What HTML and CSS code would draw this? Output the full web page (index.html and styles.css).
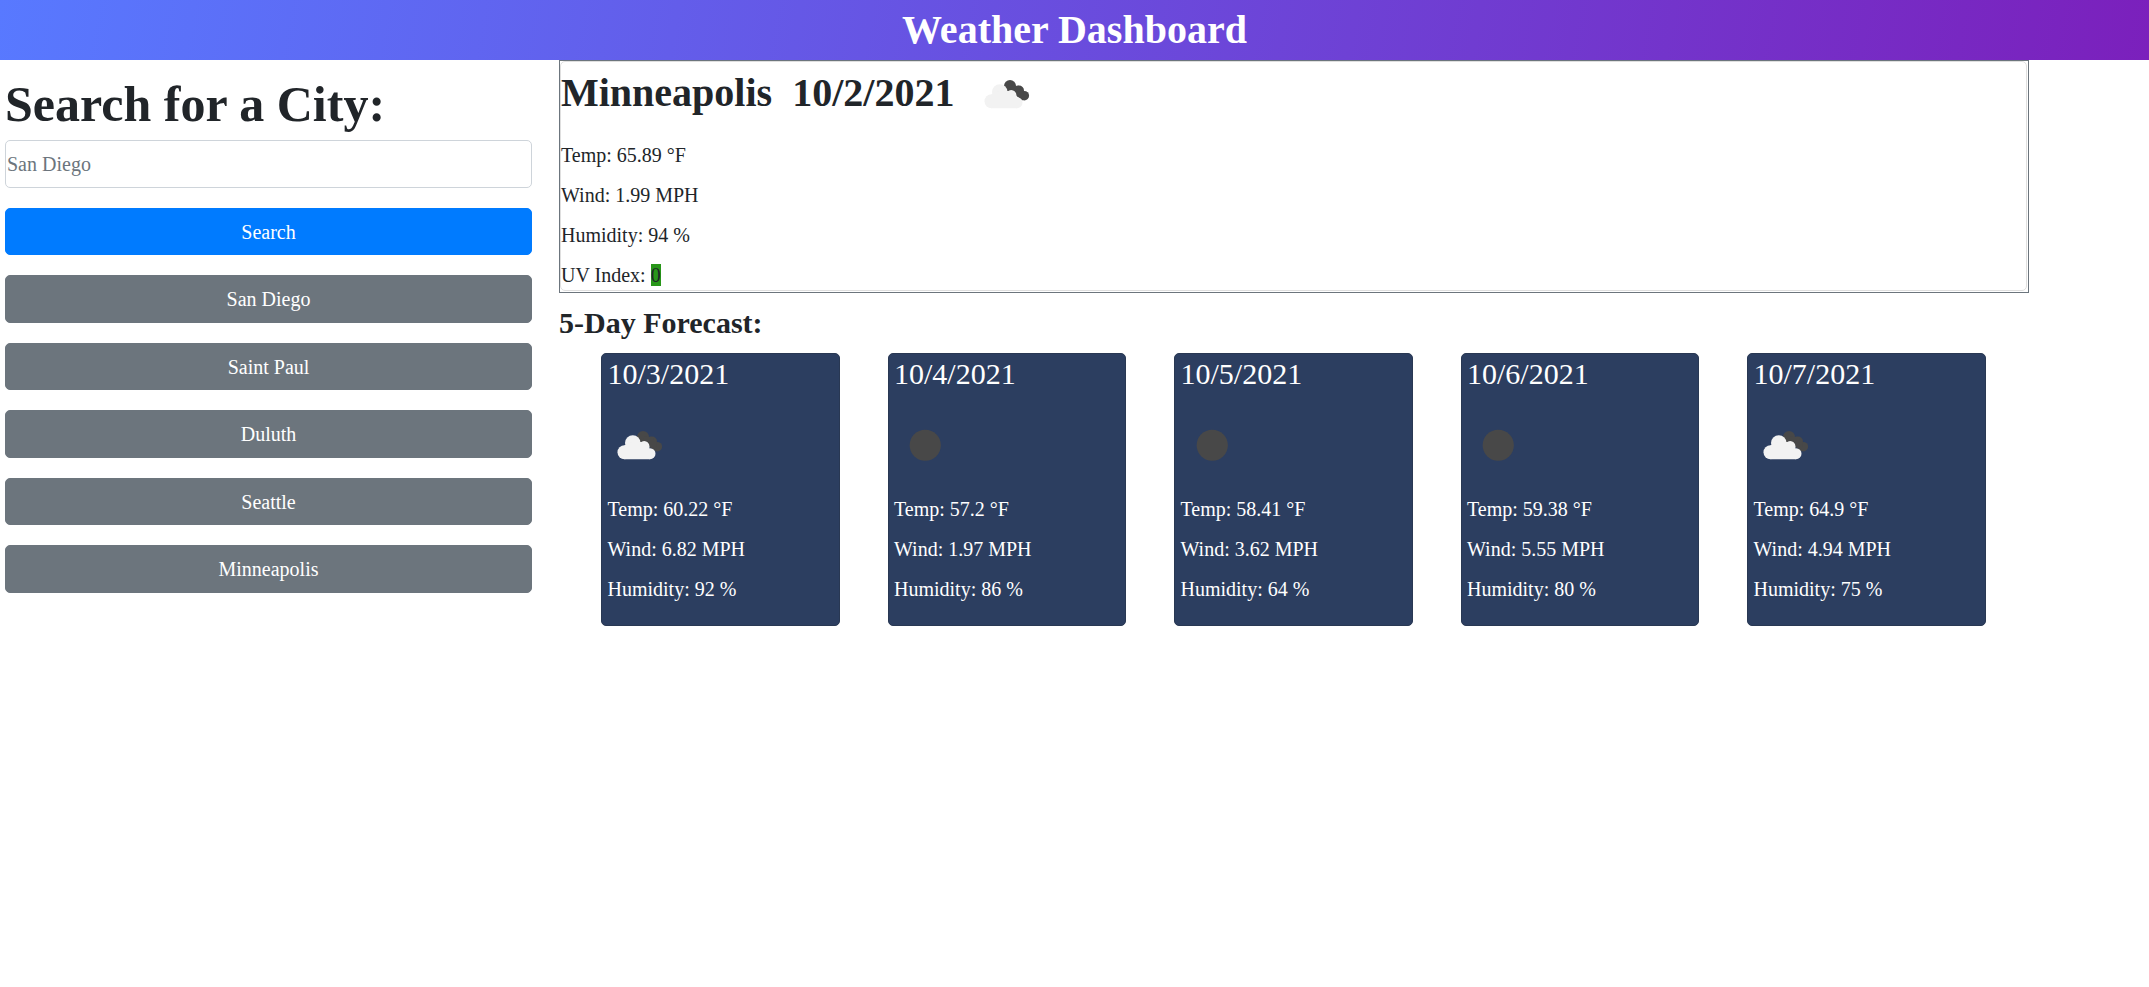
FILE: index.html
```html
<!DOCTYPE html>
<html lang="en">
<head>
<meta charset="utf-8">
<title>Weather Dashboard</title>
<link rel="stylesheet" href="styles.css">
</head>
<body>
<svg class="defs" aria-hidden="true">
  <symbol id="clouds" viewBox="0 0 62.5 62.5">
    <g fill="#484848">
      <circle cx="35" cy="23" r="6"/>
      <circle cx="44" cy="27.500" r="5"/>
      <circle cx="49.300" cy="32.700" r="4.800"/>
      <path d="M35 23L44 22.800L49 29L48 37.500L40 32Z"/>
    </g>
    <g fill="#f2f2f2">
      <circle cx="16.500" cy="38.200" r="7"/>
      <circle cx="24.800" cy="29" r="7.800"/>
      <circle cx="36.200" cy="32.300" r="5.200"/>
      <circle cx="42" cy="39.700" r="5.500"/>
      <path d="M16.500 31.200L25 28H34L41.300 33L42 45.200H16.500Z"/>
    </g>
  </symbol>
  <symbol id="moon" viewBox="0 0 62.5 62.5">
    <circle cx="31.250" cy="31.250" r="15.600" fill="#484848"/>
  </symbol>
</svg>
<header class="header"><h1>Weather Dashboard</h1></header>
<div class="layout">
  <aside class="sidebar">
    <h2>Search for a City:</h2>
    <input class="field" type="text" placeholder="San Diego">
    <button class="btn primary">Search</button>
    <button class="btn">San Diego</button>
    <button class="btn">Saint Paul</button>
    <button class="btn">Duluth</button>
    <button class="btn">Seattle</button>
    <button class="btn">Minneapolis</button>
  </aside>
  <main class="main">
    <section class="today">
      <div class="today-card">
        <div class="city"><h2>Minneapolis&nbsp; 10/2/2021</h2><svg class="icon"><use href="#clouds"/></svg></div>
        <p>Temp: 65.89 °F</p>
        <p>Wind: 1.99 MPH</p>
        <p>Humidity: 94 %</p>
        <p>UV Index: <span class="uv">0</span></p>
      </div>
    </section>
    <h3 class="forecast-title">5-Day Forecast:</h3>
    <section class="forecast">
      <article class="day"><h4>10/3/2021</h4><svg class="icon"><use href="#clouds"/></svg><p>Temp: 60.22 °F</p><p>Wind: 6.82 MPH</p><p>Humidity: 92 %</p></article>
      <article class="day"><h4>10/4/2021</h4><svg class="icon"><use href="#moon"/></svg><p>Temp: 57.2 °F</p><p>Wind: 1.97 MPH</p><p>Humidity: 86 %</p></article>
      <article class="day"><h4>10/5/2021</h4><svg class="icon"><use href="#moon"/></svg><p>Temp: 58.41 °F</p><p>Wind: 3.62 MPH</p><p>Humidity: 64 %</p></article>
      <article class="day"><h4>10/6/2021</h4><svg class="icon"><use href="#moon"/></svg><p>Temp: 59.38 °F</p><p>Wind: 5.55 MPH</p><p>Humidity: 80 %</p></article>
      <article class="day"><h4>10/7/2021</h4><svg class="icon"><use href="#clouds"/></svg><p>Temp: 64.9 °F</p><p>Wind: 4.94 MPH</p><p>Humidity: 75 %</p></article>
    </section>
  </main>
</div>
</body>
</html>
```
FILE: styles.css
```css
* { box-sizing: border-box; }
body {
  margin: 0;
  background: #fff;
  color: #212529;
  font: 20px/30px "Liberation Serif", "Times New Roman", serif;
}
h1, h2, h3, h4, p { margin: 0; }
.defs { display: none; }
.header {
  height: 60px;
  background: linear-gradient(100deg, #5879ff, #7b20bc);
  color: #fff;
  text-align: center;
}
.header h1 { font-size: 40px; line-height: 60px; }
.layout { display: flex; align-items: flex-start; }
.sidebar {
  width: 559px;
  padding: 13.5px 27px 0 5px;
  display: flex;
  flex-direction: column;
}
.sidebar h2 { font-size: 50px; line-height: 60px; margin-bottom: 6.5px; }
.field, .btn {
  height: 47.5px;
  margin: 0 0 20px;
  border: 1px solid #6c757d;
  border-radius: 5px;
  font: inherit;
}
.field { border-color: #ced4da; padding: 1px 0 0 1px; color: #495057; background: #fff; }
.field::placeholder { color: #6c757d; opacity: 1; }
.btn { background: #6c757d; color: #fff; padding: 1px 0 0; }
.primary { background: #007bff; border-color: #007bff; }
.main { width: 1470px; }
.today { border: 1px solid #6c757d; padding: 0 1px 1px 0; height: 233px; }
.today-card {
  height: 230px;
  border: 1px solid #dfdfdf;
  border-radius: 5px;
}
.city { display: flex; height: 78px; padding-top: 1px; }
.city h2 { font-size: 40px; line-height: 48px; padding-top: 5.5px; margin-right: 21px; }
.icon { display: block; width: 62.5px; height: 62.5px; }
.today p { margin-bottom: 10px; }
.uv { background: #289619; }
.forecast-title { font-size: 30px; line-height: 36px; margin: 12px 0 11.500px; }
.forecast { display: flex; gap: 47.750px; padding-left: 42px; }
.day {
  width: 238.750px;
  height: 273px;
  flex: none;
  padding: 2.500px 5.500px;
  border-radius: 5px;
  background: #2c3e60;
  border: 1px solid #293853;
  color: #fff;
}
.day h4 { font-size: 30px; line-height: 36px; font-weight: 400; margin-bottom: 22px; }
.day .icon { margin-bottom: 17.500px; }
.day p { margin-bottom: 10px; }
```
